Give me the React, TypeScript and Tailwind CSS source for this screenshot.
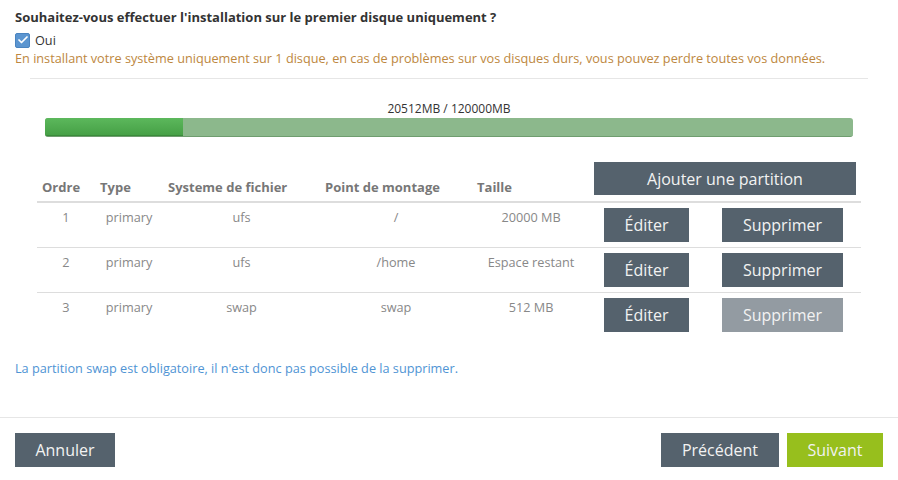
import { Check } from "lucide-react";

type Partition = { order: number; type: string; fs: string; mount: string; size: string; locked?: boolean };

const partitions: Partition[] = [
  { order: 1, type: "primary", fs: "ufs", mount: "/", size: "20000 MB" },
  { order: 2, type: "primary", fs: "ufs", mount: "/home", size: "Espace restant" },
  { order: 3, type: "primary", fs: "swap", mount: "swap", size: "512 MB", locked: true },
];

const used = 20512;
const total = 120000;

const cols = "grid grid-cols-[58px_68px_157px_152px_118px_271px]";

export default function App() {
  const pct = (used / total) * 100;

  return (
    <div className="w-[898px] h-[480px] bg-white flex flex-col font-['Open_Sans',sans-serif] text-[12.7px] leading-[18px] text-[#333]">
      <div className="px-[15px] pt-[8px]">
        <h1 className="font-bold text-[13px] leading-[18px] text-[#333]">
          Souhaitez-vous effectuer l'installation sur le premier disque uniquement ?
        </h1>
        <label className="mt-[5px] flex items-center gap-[5px]">
          <span className="w-[15px] h-[15px] rounded-[2px] bg-[#5b95d0] border border-[#4a84c0] flex items-center justify-center">
            <Check size={12} strokeWidth={3.5} className="text-white" />
          </span>
          <span className="text-[#333]">Oui</span>
        </label>
        <p className="text-[#bd8740]">
          En installant votre système uniquement sur 1 disque, en cas de problèmes sur vos disques durs, vous pouvez perdre toutes vos données.
        </p>
        <div className="mt-[11px] ml-[15px] w-[838px] h-px bg-[#e6e6e6]" />
      </div>

      <div className="mt-[22px] text-center text-[12px] leading-[16px] text-[#333]">
        {used}MB / {total}MB
      </div>
      <div className="mt-[1px] ml-[45px] w-[808px] h-[19px] rounded-[3px] bg-[#8cb88c] border-b border-[#6f9d6f] flex overflow-hidden">
        <div
          className="h-full bg-gradient-to-b from-[#5cb85c] to-[#46a046] border-b border-[#3a8a3a]"
          style={{ width: `${pct}%` }}
        />
      </div>

      <div className="mt-[24px] ml-[37px] w-[824px]">
        <div className={`${cols} h-[42px] items-end border-b-2 border-[#dddddd] font-bold text-[13px] text-[#777]`}>
          <div className="pl-[5px] pb-[5px]">Ordre</div>
          <div className="pl-[5px] pb-[5px]">Type</div>
          <div className="pl-[5px] pb-[5px]">Systeme de fichier</div>
          <div className="pl-[5px] pb-[5px]">Point de montage</div>
          <div className="pl-[5px] pb-[5px]">Taille</div>
          <div className="pl-[4px] pb-[6px]">
            <button className="w-[262px] h-[33px] bg-[#55626d] text-[#f2f2f2] text-[16px] font-normal">
              Ajouter une partition
            </button>
          </div>
        </div>
        {partitions.map((p, i) => (
          <div
            key={p.order}
            className={`${cols} items-start pt-[5px] pb-[5px] text-[#888] text-center ${i < partitions.length - 1 ? "border-b border-[#dddddd]" : ""}`}
          >
            <div>{p.order}</div>
            <div>{p.type}</div>
            <div>{p.fs}</div>
            <div>{p.mount}</div>
            <div>{p.size}</div>
            <div className="flex pl-[14px] gap-[33px]">
              <button className="w-[85px] h-[34px] bg-[#55626d] text-[#f2f2f2] text-[16px]">Éditer</button>
              <button
                disabled={p.locked}
                className={`w-[121px] h-[34px] text-[#f2f2f2] text-[16px] ${p.locked ? "bg-[#939ba2]" : "bg-[#55626d]"}`}
              >
                Supprimer
              </button>
            </div>
          </div>
        ))}
      </div>

      <p className="mt-[22px] px-[15px] text-[#4f94d4]">
        La partition swap est obligatoire, il n'est donc pas possible de la supprimer.
      </p>

      <div className="mt-auto h-[63px] border-t border-[#e6e6e6] px-[15px] pt-[15px] flex items-start">
        <button className="w-[100px] h-[34px] bg-[#55626d] text-[#f2f2f2] text-[16px]">Annuler</button>
        <div className="ml-auto flex gap-[8px]">
          <button className="w-[118px] h-[34px] bg-[#55626d] text-[#f2f2f2] text-[16px]">Précédent</button>
          <button className="w-[96px] h-[34px] bg-[#97bf1d] text-[#f2f2f2] text-[16px]">Suivant</button>
        </div>
      </div>
    </div>
  );
}
